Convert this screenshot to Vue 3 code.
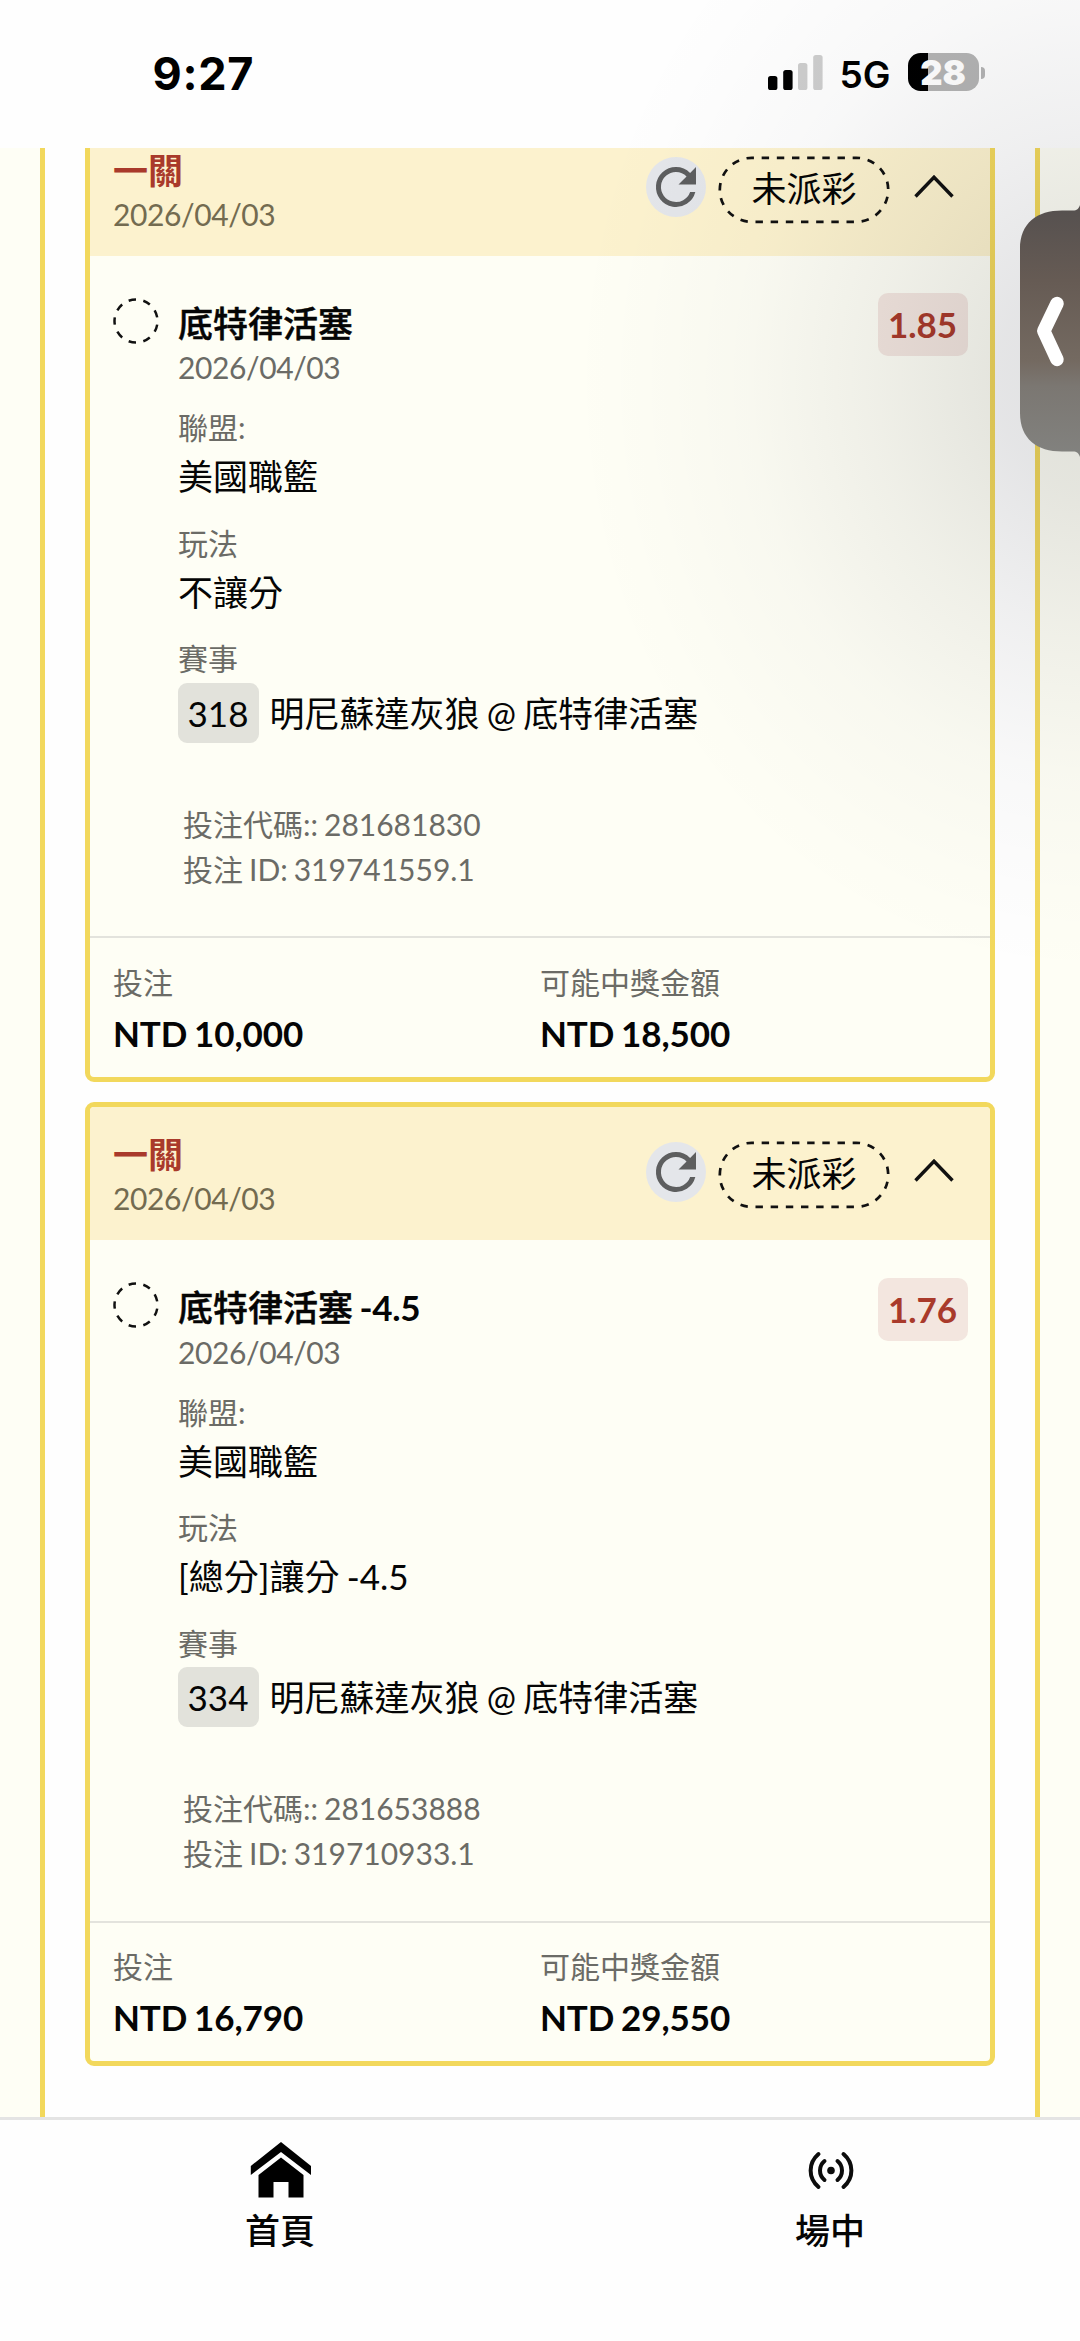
<script setup>
const bets = [
  {
    pick: '底特律活塞', line: '', odds: '1.85', market: '不讓分', number: '318',
    code: '281681830', id: '319741559.1', stake: 'NTD 10,000', win: 'NTD 18,500',
  },
  {
    pick: '底特律活塞', line: ' -4.5', odds: '1.76', market: '[總分]讓分 -4.5', number: '334',
    code: '281653888', id: '319710933.1', stake: 'NTD 16,790', win: 'NTD 29,550',
  },
]
const date = '2026/04/03'
</script>

<template>
  <div class="screen">
    <header class="status">
      <span class="time">9:27</span>
      <div class="indicators">
        <svg class="signal" width="56" height="36" viewBox="0 0 56 36">
          <rect x="0" y="21" width="9.4" height="14" rx="2.6" />
          <rect x="15.2" y="15" width="9.4" height="20" rx="2.6" />
          <rect x="30" y="8" width="9.4" height="27" rx="2.6" fill="#cdcdcd" />
          <rect x="45.2" y="0" width="9.4" height="35" rx="2.6" fill="#cdcdcd" />
        </svg>
        <span class="network">5G</span>
        <div class="battery"><span>28</span></div>
        <i class="battery-tip"></i>
      </div>
    </header>

    <main class="content">
      <div class="side left"></div>
      <div class="list">
        <article v-for="bet in bets" :key="bet.id" class="card">
          <div class="card-head">
            <div class="head-text">
              <div class="parlay">一關</div>
              <div class="date">{{ date }}</div>
            </div>
            <div class="refresh">
              <svg width="60" height="60" viewBox="0 0 24 24">
                <path fill="#5d5e5f" d="M17.65 6.35A7.96 7.96 0 0 0 12 4a8 8 0 1 0 7.73 10h-2.08A6 6 0 1 1 12 6c1.66 0 3.14.69 4.22 1.78L13 11h7V4z" />
              </svg>
            </div>
            <div class="state">
              <svg class="state-line" width="172" height="68" viewBox="0 0 172 68">
                <rect x="1.8" y="1.8" width="168.4" height="64" rx="32" pathLength="27" fill="none" stroke="#111" stroke-width="2.7" stroke-dasharray=".49 .51" stroke-dashoffset=".35" />
              </svg>
              <span>未派彩</span>
            </div>
            <svg class="caret" width="40" height="26" viewBox="0 0 40 26">
              <path d="M1.5 22.5 20 3.2 38.500 22.500" fill="none" stroke="#111" stroke-width="3.4" />
            </svg>
          </div>

          <div class="card-body">
            <svg class="ring" width="46" height="46" viewBox="0 0 46 46">
              <circle cx="23" cy="23" r="21.500" pathLength="9" fill="none" stroke="#111" stroke-width="2.5" stroke-dasharray=".5 .5" stroke-dashoffset=".25" transform="rotate(180 23 23)" />
            </svg>
            <div class="detail">
              <div class="pick"><span>{{ bet.pick }}</span><b>{{ bet.line }}</b></div>
              <div class="date">{{ date }}</div>
              <div class="field">
                <div class="label">聯盟:</div>
                <div class="value">美國職籃</div>
              </div>
              <div class="field">
                <div class="label">玩法</div>
                <div class="value">{{ bet.market }}</div>
              </div>
              <div class="field">
                <div class="label">賽事</div>
                <div class="match"><span class="number">{{ bet.number }}</span><span>明尼蘇達灰狼 @ 底特律活塞</span></div>
              </div>
              <div class="codes">
                <div>投注代碼:: {{ bet.code }}</div>
                <div>投注 ID: {{ bet.id }}</div>
              </div>
            </div>
            <div class="odds">{{ bet.odds }}</div>
          </div>

          <div class="card-foot">
            <div>
              <div class="label">投注</div>
              <div class="money">{{ bet.stake }}</div>
            </div>
            <div>
              <div class="label">可能中獎金額</div>
              <div class="money">{{ bet.win }}</div>
            </div>
          </div>
        </article>
      </div>
      <div class="side right"></div>
    </main>

    <nav class="tabs">
      <a class="tab">
        <svg width="62" height="56" viewBox="0 0 62 56">
          <path d="M31 0 61 24V33L31 10 .8 33V24z" />
          <path d="M31 15.500 53.500 33V55.500H38.500V40H23.500V55.500H8.500V33z" />
        </svg>
        <span>首頁</span>
      </a>
      <a class="tab">
        <svg width="62" height="56" viewBox="0 0 62 56" fill="none" stroke="#0c0c0c" stroke-width="4" stroke-linecap="round">
          <circle cx="31" cy="28.500" r="3.800" fill="#0c0c0c" stroke="none" />
          <path d="M24.500 19C18.500 24 18.500 33 24.500 38M37.500 19C43.500 24 43.500 33 37.500 38" />
          <path d="M18.500 12C8 21 8 36 18.500 45M43.500 12C54 21 54 36 43.500 45" />
        </svg>
        <span>場中</span>
      </a>
    </nav>

    <div class="shade"></div>
    <svg class="drawer" width="60" height="252" viewBox="0 0 60 252">
      <defs>
        <linearGradient id="drawer-fill" x1="0" y1="0" x2="0" y2="1">
          <stop offset="0" stop-color="#55504f" />
          <stop offset=".3" stop-color="#665b54" />
          <stop offset=".62" stop-color="#746a61" />
          <stop offset=".72" stop-color="#7b7772" />
          <stop offset="1" stop-color="#82827f" />
        </linearGradient>
      </defs>
      <path d="M60 0C58.500 4 57 5.500 53 5.500H42C17 5.500 0 18 0 44V208C0 234 17 246.500 42 246.500H53C57 246.500 58.500 248 60 252z" fill="url(#drawer-fill)" />
      <path d="M37 98.500 23.800 126 37 154.500" fill="none" stroke="#fff" stroke-width="13.500" stroke-linecap="round" stroke-linejoin="round" />
    </svg>
  </div>
</template>

<style>
body { margin: 0; background: #fefefe; }
</style>

<style scoped>
.screen {
  position: relative;
  display: flex;
  flex-direction: column;
  width: 1080px;
  height: 2341px;
  overflow: hidden;
  background: #fefefe;
  color: #050505;
  font-family: Lato, "Noto Sans CJK TC", sans-serif;
  word-spacing: -1.700px;
}
.status {
  display: flex;
  justify-content: space-between;
  flex: none;
  box-sizing: border-box;
  height: 148px;
  padding: 47px 95.500px 0 152.500px;
  font-family: Inter, sans-serif;
}
.time { font-size: 45px; font-weight: 700; line-height: 54px; color: #000; letter-spacing: .7px; }
.indicators { display: flex; align-items: flex-start; }
.signal { margin-top: 8px; }
.network { width: 68px; margin-left: 16px; font-size: 37px; font-weight: 600; line-height: 56px; color: #000; }
.battery {
  width: 71px;
  height: 38px;
  margin-top: 6px;
  border-radius: 12.500px;
  background: linear-gradient(90deg, #000 20px, #b4b4b4 20px);
  color: #fff;
  font-size: 34.500px;
  font-weight: 900;
  line-height: 39px;
  text-align: center;
}
.battery-tip { width: 4px; height: 12px; margin: 20px 0 0 2px; border-radius: 0 5px 5px 0; background: #b4b4b4; }

.content { display: flex; flex: none; height: 1969px; overflow: hidden; }
.side { box-sizing: border-box; width: 45.500px; background: #fefef5; }
.left { border-right: 5px solid #f2d85c; }
.right { border-left: 5px solid #f2d85c; }
.list {
  display: flex;
  flex: 1;
  flex-direction: column;
  gap: 20px;
  margin: -31px 40px 0;
}
.card {
  box-sizing: border-box;
  flex: none;
  height: 964.500px;
  border: 5px solid #f2d85c;
  border-radius: 9px;
  background: #fefef5;
  overflow: hidden;
}
.card-head {
  display: flex;
  box-sizing: border-box;
  height: 133.500px;
  padding: 25.500px 36px 0 23px;
  background: #fcf2ce;
}
.head-text { flex: 1; }
.parlay { color: #a93a2b; font-size: 35px; font-weight: 700; line-height: 45px; height: 44px; }
.date { color: #6b6b66; font-size: 30px; line-height: 45px; letter-spacing: -.4px; }
.card-head .date { color: #736b50; }
.refresh { width: 60px; height: 60px; margin-top: 9.500px; border-radius: 50%; background: #e4e6ea; }
.refresh svg { display: block; }
.state { position: relative; width: 172px; height: 68px; margin: 8.500px 24px 0 12px; text-align: center; font-size: 35px; line-height: 65px; }
.state-line { position: absolute; left: 0; top: 0; }
.caret { margin-top: 26px; }

.card-body { display: flex; align-items: flex-start; box-sizing: border-box; height: 680.500px; padding: 0 22.500px; }
.ring { margin-top: 42px; }
.detail { flex: 1; padding: 45px 0 0 19.500px; white-space: nowrap; }
.pick { height: 44.500px; font-size: 35px; font-weight: 500; line-height: 45px; }
.pick span { -webkit-text-stroke: .5px currentColor; }
.pick b { font-weight: 700; white-space: pre; letter-spacing: -.3px; }
.field { height: 100.500px; padding-top: 15px; }
.label { height: 49px; color: #6b6b66; font-size: 30px; line-height: 45px; }
.value { font-size: 35px; line-height: 45px; }
.match { display: flex; gap: 11px; margin-top: -2.500px; font-size: 35px; line-height: 60px; }
.number { box-sizing: border-box; width: 81px; margin-left: -.5px; border-radius: 9px; background: #e2e2db; text-align: center; }
.codes { margin-top: 65px; padding-left: 5px; color: #6b6b66; font-size: 30px; line-height: 45px; }
.odds {
  width: 90px;
  height: 63px;
  margin-top: 37.500px;
  border-radius: 10px;
  background: #f3e6df;
  color: #a93a2b;
  text-align: center;
  font-size: 35px;
  font-weight: 700;
  line-height: 63px;
}
.card-foot { display: flex; padding: 21.500px 23px 0; border-top: 2.500px solid #e3e3dd; }
.card-foot > div { flex: 0 0 427px; }
.card-foot .label { height: 51px; }
.money { font-size: 35px; font-weight: 700; line-height: 45px; letter-spacing: -.1px; }

.tabs { display: grid; flex: 1; grid-template-columns: 562px 538px; border-top: 3px solid #e4e4e4; background: #fefefe; }
.tab { display: flex; flex-direction: column; align-items: center; padding-top: 22px; }
.tab span { margin: 10px 2px 0 0; font-size: 35px; font-weight: 500; line-height: 45px; }

/* soft shadow cast by the edge drawer */
.shade {
  position: absolute;
  inset: 0;
  pointer-events: none;
  background: radial-gradient(ellipse 520px 600px at 1090px 380px, rgba(5, 8, 20, .12) 0, rgba(5, 8, 20, .1) 18%, rgba(5, 8, 20, .058) 42%, rgba(5, 8, 20, .025) 66%, rgba(5, 8, 20, .007) 87%, transparent 100%);
}
.drawer { position: absolute; right: 0; top: 205px; }
</style>
